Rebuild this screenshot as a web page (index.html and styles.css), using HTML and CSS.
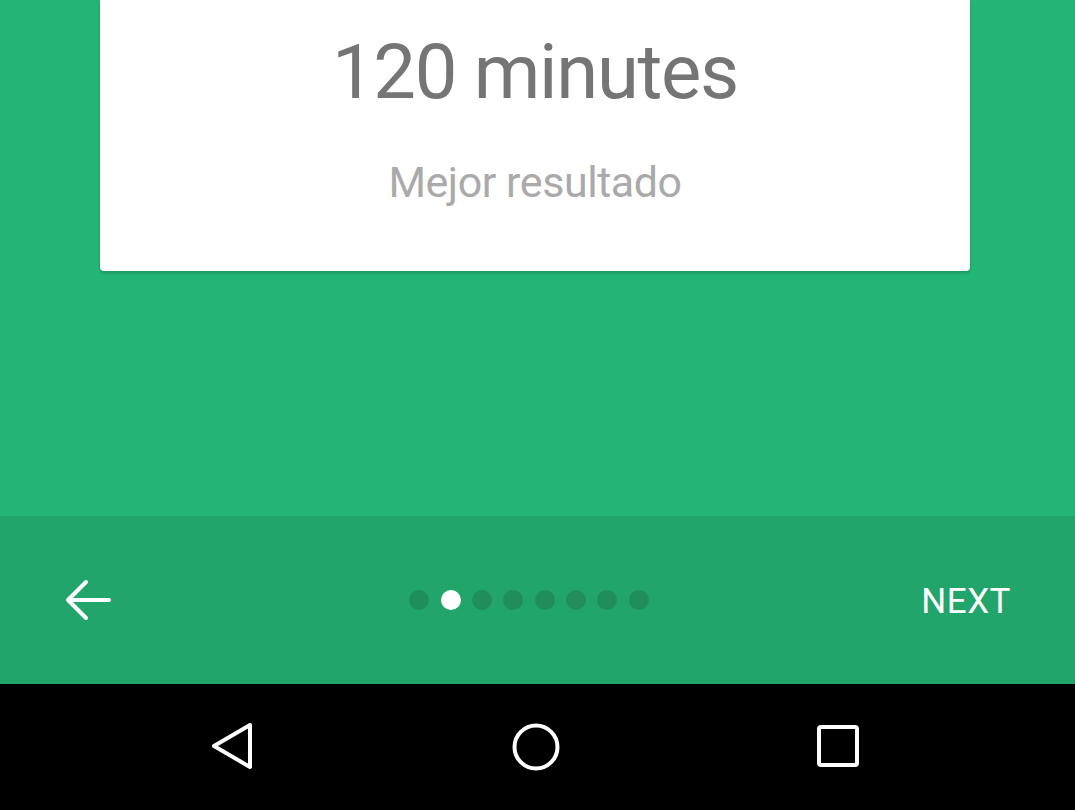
FILE: index.html
```html
<!DOCTYPE html>
<html>
<head>
<meta charset="utf-8">
<link rel="stylesheet" href="styles.css">
</head>
<body>
<div class="screen">
  <main class="content">
    <section class="card">
      <div class="title">120 minutes</div>
      <div class="subtitle">Mejor resultado</div>
    </section>
  </main>
  <footer class="pager">
    <button class="back" aria-label="Back">
      <svg width="48" height="44" viewBox="0 0 48 44"><path d="M45 22H4M22 4L4 22l18 18" fill="none" stroke="#fff" stroke-width="4" stroke-linecap="round" stroke-linejoin="round"/></svg>
    </button>
    <div class="dots">
      <span class="dot"></span><span class="dot on"></span><span class="dot"></span><span class="dot"></span><span class="dot"></span><span class="dot"></span><span class="dot"></span><span class="dot"></span>
    </div>
    <button class="next">NEXT</button>
  </footer>
  <nav class="sysnav">
    <svg class="ico" width="48" height="52" viewBox="0 0 48 52"><path d="M40 4L4 25l36 21z" fill="none" stroke="#fff" stroke-width="4" stroke-linejoin="round"/></svg>
    <svg class="ico" width="52" height="52" viewBox="0 0 52 52"><circle cx="26" cy="26" r="21.5" fill="none" stroke="#fff" stroke-width="4"/></svg>
    <svg class="ico" width="48" height="48" viewBox="0 0 48 48"><rect x="5" y="4" width="38" height="38" rx="2" fill="none" stroke="#fff" stroke-width="4"/></svg>
  </nav>
</div>
</body>
</html>
```
FILE: styles.css
```css
* { box-sizing: border-box; }
html, body { margin: 0; padding: 0; }
body {
  width: 1075px;
  height: 810px;
  overflow: hidden;
  font-family: Roboto, "Liberation Sans", sans-serif;
  background: #000;
}
.screen {
  display: flex;
  flex-direction: column;
  height: 810px;
}
.content {
  height: 516px;
  background: #23b573;
  display: flex;
  justify-content: flex-start;
  align-items: flex-start;
  padding-left: 100px;
}
.card {
  width: 870px;
  height: 271px;
  background: #fff;
  border-radius: 0 0 4px 4px;
  box-shadow: 0 2px 3px rgba(0,0,0,0.18);
  display: flex;
  flex-direction: column;
  align-items: center;
  padding-top: 32px;
}
.title {
  font-size: 76px;
  line-height: 80px;
  letter-spacing: -1.3px;
  color: #757575;
}
.subtitle {
  margin-top: 45px;
  font-size: 43px;
  line-height: 50px;
  letter-spacing: -0.45px;
  color: #aaaaaa;
}
.pager {
  height: 168px;
  background: #22a56b;
  display: flex;
  align-items: center;
  justify-content: space-between;
  padding: 0 64px 0 64px;
}
.back, .next {
  background: none;
  border: 0;
  padding: 0;
  color: #fff;
  font-family: inherit;
  display: flex;
  align-items: center;
}
.back { width: 200px; }
.next {
  width: 200px;
  justify-content: flex-end;
  font-size: 35px;
  letter-spacing: 0.5px;
  padding-top: 2px;
}
.dots {
  display: flex;
  gap: 11.3px;
  align-items: center;
  margin-left: -17px;
}
.dot {
  width: 20px;
  height: 20px;
  border-radius: 50%;
  background: #1f8e5c;
}
.dot.on { background: #ffffff; }
.sysnav {
  height: 126px;
  background: #000;
  display: flex;
  align-items: center;
  justify-content: space-between;
  padding: 0 213px 0 210px;
}
```
